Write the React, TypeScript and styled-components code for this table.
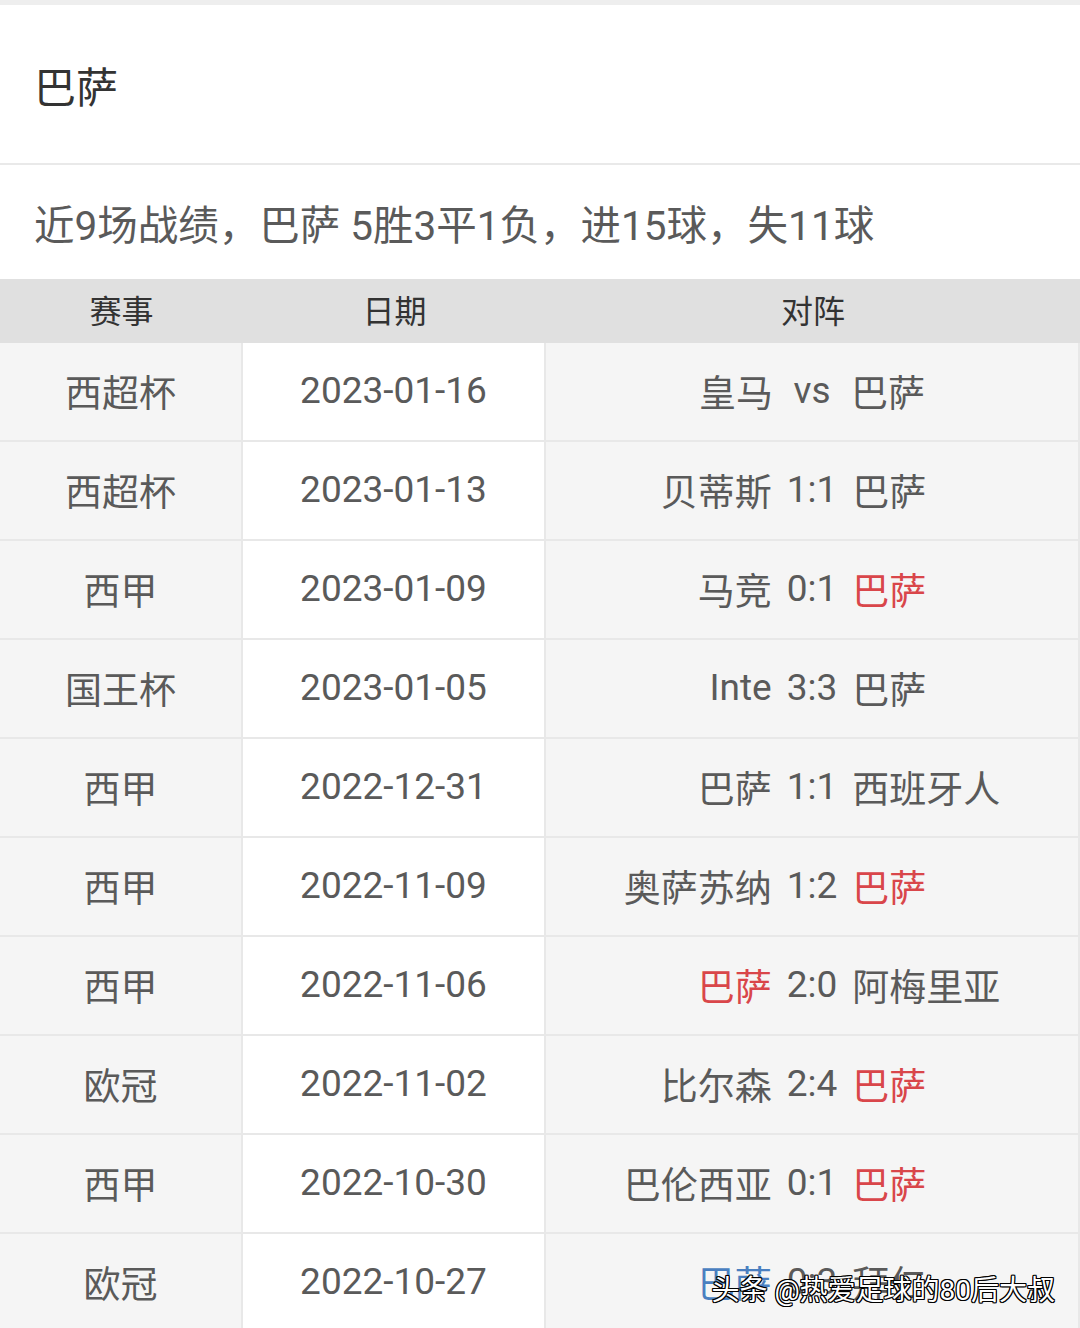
import React from 'react'
import styled, { createGlobalStyle } from 'styled-components'

const GlobalStyle = createGlobalStyle`
  html, body {
    margin: 0;
    padding: 0;
    background: #fff;
    overflow: hidden;
  }
  body {
    font-family: Roboto, 'Noto Sans CJK SC', sans-serif;
  }
`

const Page = styled.div`
  position: relative;
  width: 1080px;
  border-top: 5px solid #eeeeee;
`
const TitleBar = styled.div`
  height: 158px;
  display: flex;
  align-items: center;
  padding-left: 34px;
  font-size: 42px;
  color: #333;
  border-bottom: 2px solid #e9e9e9;
`
const Summary = styled.div`
  height: 114px;
  display: flex;
  align-items: center;
  padding-left: 34px;
  font-size: 40.5px;
  color: #5a5a5a;
`
const Table = styled.div`
  display: flex;
  flex-direction: column;
`
const Row = styled.div<{ $head?: boolean }>`
  display: grid;
  grid-template-columns: 243px 303px 1fr;
  height: ${(p) => (p.$head ? '64px' : '99px')};
  background: ${(p) => (p.$head ? '#e0e0e0' : 'transparent')};
  border-bottom: ${(p) => (p.$head ? 'none' : '2px solid #e8e8e8')};
  box-sizing: border-box;
`
const HeadCell = styled.div`
  display: flex;
  align-items: center;
  justify-content: center;
  font-size: 32px;
  color: #333;
  padding-bottom: 4px;
`
const Cell = styled.div<{ $white?: boolean }>`
  display: flex;
  align-items: center;
  justify-content: center;
  font-size: 37px;
  color: #5a5a5a;
  background: ${(p) => (p.$white ? '#fff' : '#f5f5f5')};
  border-right: 2px solid #e8e8e8;
  padding-bottom: 2px;
`
const Match = styled.div`
  display: grid;
  grid-template-columns: 1fr auto 1fr;
  column-gap: 15px;
  align-items: center;
  width: 100%;
`
const Team = styled.span<{ $side: 'home' | 'away'; $tone?: 'red' | 'blue' }>`
  text-align: ${(p) => (p.$side === 'home' ? 'right' : 'left')};
  color: ${(p) => (p.$tone === 'red' ? '#d9464a' : p.$tone === 'blue' ? '#4a7fc0' : '#5a5a5a')};
`
const Score = styled.span`
  text-align: center;
  min-width: 48px;
`
const Watermark = styled.div`
  position: absolute;
  top: 1263px;
  right: 25px;
  font-size: 28px;
  color: #fff;
  white-space: nowrap;
  text-shadow: 1px 1px 0 #000, -1px 1px 0 #000, 1px -1px 0 #000, -1px -1px 0 #000,
    0 1px 0 #000, 0 -1px 0 #000, 1px 0 0 #000, -1px 0 0 #000;
`

type Tone = 'red' | 'blue' | undefined
type Game = {
  cup: string
  date: string
  home: string
  score: string
  away: string
  homeTone?: Tone
  awayTone?: Tone
}

const games: Game[] = [
  { cup: '西超杯', date: '2023-01-16', home: '皇马', score: 'vs', away: '巴萨' },
  { cup: '西超杯', date: '2023-01-13', home: '贝蒂斯', score: '1:1', away: '巴萨' },
  { cup: '西甲', date: '2023-01-09', home: '马竞', score: '0:1', away: '巴萨', awayTone: 'red' },
  { cup: '国王杯', date: '2023-01-05', home: 'Inte', score: '3:3', away: '巴萨' },
  { cup: '西甲', date: '2022-12-31', home: '巴萨', score: '1:1', away: '西班牙人' },
  { cup: '西甲', date: '2022-11-09', home: '奥萨苏纳', score: '1:2', away: '巴萨', awayTone: 'red' },
  { cup: '西甲', date: '2022-11-06', home: '巴萨', score: '2:0', away: '阿梅里亚', homeTone: 'red' },
  { cup: '欧冠', date: '2022-11-02', home: '比尔森', score: '2:4', away: '巴萨', awayTone: 'red' },
  { cup: '西甲', date: '2022-10-30', home: '巴伦西亚', score: '0:1', away: '巴萨', awayTone: 'red' },
  { cup: '欧冠', date: '2022-10-27', home: '巴萨', score: '0:3', away: '拜仁', homeTone: 'blue' },
]

const App: React.FC = () => {
  return (
    <Page>
      <GlobalStyle />
      <TitleBar>巴萨</TitleBar>
      <Summary>近9场战绩，巴萨 5胜3平1负，进15球，失11球</Summary>
      <Table>
        <Row $head>
          <HeadCell>赛事</HeadCell>
          <HeadCell>日期</HeadCell>
          <HeadCell>对阵</HeadCell>
        </Row>
        {games.map((g) => (
          <Row key={g.date}>
            <Cell>{g.cup}</Cell>
            <Cell $white>{g.date}</Cell>
            <Cell>
              <Match>
                <Team $side="home" $tone={g.homeTone}>
                  {g.home}
                </Team>
                <Score>{g.score}</Score>
                <Team $side="away" $tone={g.awayTone}>
                  {g.away}
                </Team>
              </Match>
            </Cell>
          </Row>
        ))}
      </Table>
      <Watermark>头条 @热爱足球的80后大叔</Watermark>
    </Page>
  )
}

export default App
